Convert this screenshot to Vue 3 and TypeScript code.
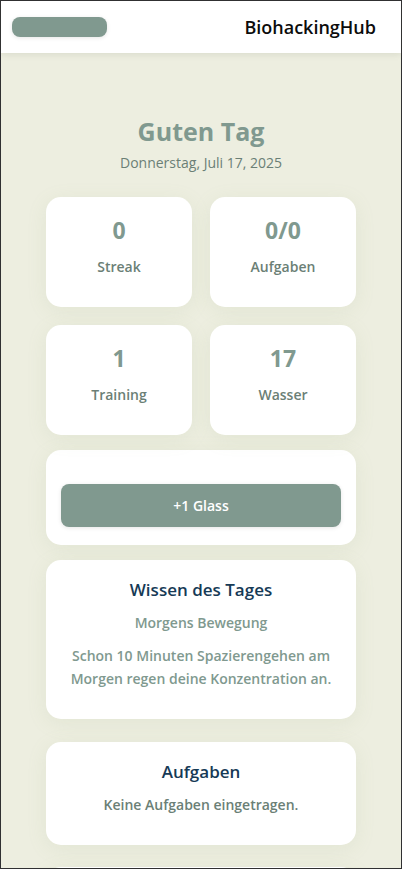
<script setup lang="ts">
import { ref, computed } from 'vue'

interface Stat {
  label: string
  value: string
}

const glasses = ref<number>(17)

const stats = computed<Stat[]>(() => [
  { label: 'Streak', value: '0' },
  { label: 'Aufgaben', value: '0/0' },
  { label: 'Training', value: '1' },
  { label: 'Wasser', value: String(glasses.value) },
])

function addGlass(): void {
  glasses.value += 1
}
</script>

<template>
  <div class="app">
    <header class="topbar">
      <button class="btn menu" type="button"></button>
      <span class="brand">BiohackingHub</span>
    </header>

    <main class="content">
      <div class="greeting">
        <h1>Guten Tag</h1>
        <p>Donnerstag, Juli 17, 2025</p>
      </div>

      <section class="stats">
        <article v-for="stat in stats" :key="stat.label" class="card stat">
          <strong>{{ stat.value }}</strong>
          <span>{{ stat.label }}</span>
        </article>
      </section>

      <section class="card water">
        <button class="btn add" type="button" @click="addGlass">+1 Glass</button>
      </section>

      <section class="card tip">
        <h2>Wissen des Tages</h2>
        <p>Morgens Bewegung</p>
        <p>Schon 10 Minuten Spazierengehen am Morgen regen deine Konzentration an.</p>
      </section>

      <section class="card tasks">
        <h2>Aufgaben</h2>
        <p>Keine Aufgaben eingetragen.</p>
      </section>

      <section class="card more"></section>
    </main>
  </div>
</template>

<style>
body {
  margin: 0;
  background: #edeee0;
}
</style>

<style scoped>
.app {
  display: flex;
  flex-direction: column;
  box-sizing: border-box;
  height: 100vh;
  border: 1px solid #303032;
  background: #edeee0;
  font-family: "Open Sans", "Noto Sans", sans-serif;
  font-size: 14px;
  font-weight: 600;
  color: #6b7f76;
}

.topbar {
  position: relative;
  z-index: 1;
  display: flex;
  flex: none;
  align-items: center;
  justify-content: space-between;
  box-sizing: border-box;
  height: 52px;
  padding: 0 25px 0 11px;
  background: #fff;
  box-shadow: 0 2px 6px rgba(90, 100, 70, 0.12);
}

.brand {
  color: #0c0c0c;
  font-size: 18px;
  font-weight: 600;
}

.btn {
  border: 0;
  border-radius: 8px;
  background: #80998f;
  box-shadow: 0 1px 4px rgba(0, 0, 0, 0.1);
  color: #fff;
  font: inherit;
  cursor: pointer;
}

.menu {
  width: 95px;
  height: 20px;
}

.content {
  flex: 1;
  min-height: 0;
  padding: 60px 45px 0;
  overflow-y: auto;
  scrollbar-width: none;
  text-align: center;
}

.greeting h1 {
  margin: 0;
  color: #80998f;
  font-size: 25px;
  font-weight: 700;
  line-height: 36px;
}

.greeting p {
  margin: 0;
  font-weight: 400;
  line-height: 28px;
}

.stats {
  display: grid;
  grid-template-columns: 1fr 1fr;
  gap: 18px;
  margin: 20px 0 15px;
}

.card {
  box-sizing: border-box;
  padding: 16px 15px;
  border-radius: 15px;
  background: #fff;
  box-shadow: 0 4px 20px rgba(150, 175, 120, 0.12);
}

.stat {
  display: flex;
  flex-direction: column;
  height: 110px;
}

.stat strong {
  margin-bottom: 9px;
  color: #80998f;
  font-size: 23px;
  font-weight: 700;
  line-height: 34px;
}

.stat span {
  line-height: 22px;
}

.water {
  margin-bottom: 15px;
  padding: 34px 15px 18px;
}

.add {
  display: block;
  width: 100%;
  height: 43px;
}

.card h2 {
  margin: 0 0 7px;
  color: #163a56;
  font-size: 17px;
  font-weight: 600;
  line-height: 28px;
}

.card p {
  margin: 0 0 10px;
  line-height: 23px;
}

.tip {
  margin-bottom: 23px;
  padding-bottom: 19px;
  color: #80998f;
}

.tasks {
  margin-bottom: 22px;
  padding-bottom: 19px;
}

.more {
  height: 100px;
}
</style>
